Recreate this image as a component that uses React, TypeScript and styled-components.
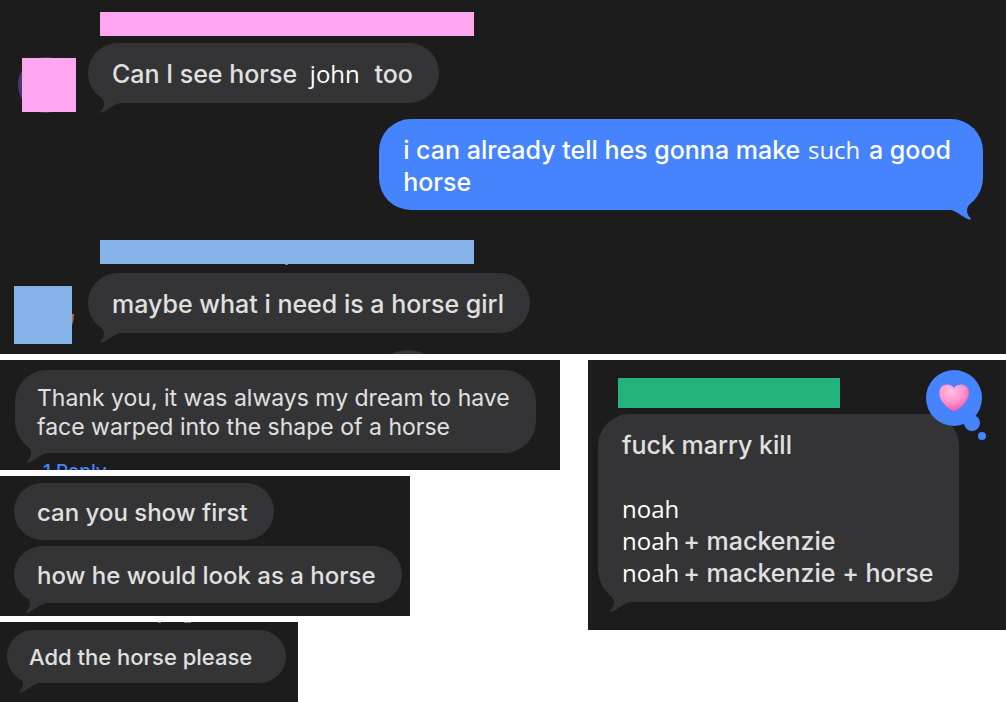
import React from "react";
import styled, { createGlobalStyle } from "styled-components";

const GlobalStyle = createGlobalStyle`
  *, *::before, *::after { box-sizing: border-box; }
  body { margin: 0; background: #ffffff; }
`;

const colors = {
  panel: "#1c1c1c",
  received: "#343436",
  sent: "#4583ff",
  text: "#e0e0e1",
};

const Page = styled.main`
  display: flex;
  flex-direction: column;
  gap: 6px;
  font-family: Inter, "Liberation Sans", sans-serif;
  color: ${colors.text};
`;

const Columns = styled.div`
  display: grid;
  grid-template-columns: minmax(0, 560fr) minmax(0, 418fr);
  column-gap: 28px;
  align-items: start;
`;

const Stack = styled.div`
  display: flex;
  flex-direction: column;
  align-items: flex-start;
  gap: 6px;
`;

const Panel = styled.section<{ $pad: string; $width?: string; $gap?: number }>`
  position: relative;
  display: flex;
  flex-direction: column;
  align-items: flex-start;
  gap: ${(p) => p.$gap ?? 0}px;
  width: ${(p) => p.$width ?? "100%"};
  padding: ${(p) => p.$pad};
  overflow: hidden;
  background: ${colors.panel};
`;

const NameBar = styled.div<{
  $color: string;
  $width: number;
  $indent: number;
  $height: number;
  $top?: number;
}>`
  width: ${(p) => p.$width}px;
  max-width: 100%;
  height: ${(p) => p.$height}px;
  margin-top: ${(p) => p.$top ?? 0}px;
  margin-left: ${(p) => p.$indent}px;
  background: ${(p) => p.$color};
`;

const Row = styled.div<{ $top: number }>`
  display: flex;
  align-items: flex-start;
  width: 100%;
  margin-top: ${(p) => p.$top}px;
`;

const AvatarSlot = styled.div<{ $left: number }>`
  flex: none;
  width: 88px;
  padding: 12px 0 0 ${(p) => p.$left}px;
  line-height: 0;
`;

type Size = "large" | "wrapped" | "medium" | "compact" | "small";

const sizes: Record<
  Size,
  { font: number; weight: number; line: number; pad: string; radius: number }
> = {
  large: { font: 25, weight: 500, line: 32, pad: "15px 26px 13px 24px", radius: 32 },
  wrapped: { font: 25, weight: 500, line: 32, pad: "15px 32px 12px 24px", radius: 32 },
  medium: { font: 23, weight: 400, line: 29, pad: "14px 26px 11px 22px", radius: 32 },
  compact: { font: 24, weight: 500, line: 31, pad: "14px 26px 12px 23px", radius: 30 },
  small: { font: 22, weight: 500, line: 29, pad: "13px 34px 11px 22px", radius: 28 },
};

const BubbleBox = styled.div<{ $size: Size; $sent?: boolean }>`
  position: relative;
  width: fit-content;
  margin-left: ${(p) => (p.$sent ? "auto" : "0")};
  padding: ${(p) => sizes[p.$size].pad};
  border-radius: ${(p) => sizes[p.$size].radius}px;
  background: ${(p) => (p.$sent ? colors.sent : colors.received)};
  color: ${(p) => (p.$sent ? "#ffffff" : colors.text)};
  font-size: ${(p) => sizes[p.$size].font}px;
  font-weight: ${(p) => sizes[p.$size].weight};
  line-height: ${(p) => sizes[p.$size].line}px;
`;

const Line = styled.p`
  margin: 0;
  min-height: 1lh;
  white-space: nowrap;
`;

const Word = styled.span<{ $gap?: string }>`
  margin: ${(p) => p.$gap ?? "0"};
  font-family: "Open Sans", "Noto Sans", sans-serif;
  font-size: 24px;
  font-weight: 500;
  line-height: 1;
  color: #ffffff;
`;

const TailSvg = styled.svg<{ $sent?: boolean }>`
  position: absolute;
  bottom: -10px;
  ${(p) => (p.$sent ? "right: 8px; transform: scaleX(-1);" : "left: 8px;")}
`;

const Tail = ({ sent }: { sent?: boolean }) => (
  <TailSvg $sent={sent} width="26" height="20" viewBox="0 0 26 20" aria-hidden="true">
    <path
      d="M2 1C6 4.500 8 7 8 10.500C8 13.500 6.500 16 4.500 18C3.600 19.400 4.400 20 6 19.600C11 18 16 12.500 24 10V1Z"
      fill={sent ? colors.sent : colors.received}
    />
  </TailSvg>
);

interface BubbleProps {
  size: Size;
  sent?: boolean;
  tail?: boolean;
  lines: React.ReactNode[];
  children?: React.ReactNode;
}

const Bubble = ({ size, sent, tail = true, lines, children }: BubbleProps) => (
  <BubbleBox $size={size} $sent={sent}>
    {tail && <Tail sent={sent} />}
    {lines.map((line, i) => (
      <Line key={i}>{line}</Line>
    ))}
    {children}
  </BubbleBox>
);

const ReplyLink = styled.a`
  height: 9px;
  margin: 8px 0 0 28px;
  color: ${colors.sent};
  font-size: 19px;
  font-weight: 500;
  line-height: 22px;
  text-decoration: none;
`;

const ReactionSvg = styled.svg`
  position: absolute;
  top: -46px;
  right: -30px;
`;

const Reaction = () => (
  <ReactionSvg width="64" height="74" viewBox="0 0 64 74" role="img" aria-label="Heart reaction">
    <defs>
      <radialGradient id="heart" cx="0.4" cy="0.25" r="0.8">
        <stop offset="0" stopColor="#ffbfe2" />
        <stop offset="0.55" stopColor="#ff92cd" />
        <stop offset="1" stopColor="#ff45a0" />
      </radialGradient>
    </defs>
    <g fill={colors.sent}>
      <circle cx="29" cy="30" r="28" />
      <circle cx="47" cy="55" r="8" />
      <circle cx="57" cy="68" r="4" />
    </g>
    <path
      d="M29 43.500C26 42.500 14.300 34.500 14.300 25C14.300 20 17.500 16.500 21.700 16.500C25 16.500 27.700 17.500 29 20.500C30.300 17.500 33 16.500 36.500 16.500C40.700 16.500 43.900 20 43.900 25C43.900 34.500 32 42.500 29 43.500Z"
      fill="url(#heart)"
    />
  </ReactionSvg>
);

const NextBubble = styled.svg`
  position: absolute;
  left: 388px;
  bottom: 0;
`;

const Specks = styled.svg<{ $left: number; $top: number }>`
  position: absolute;
  left: ${(p) => p.$left}px;
  top: ${(p) => p.$top}px;
`;

export default function App() {
  return (
    <Page>
      <GlobalStyle />
      <Panel $pad="12px 23px 9px 0">
        <NameBar $color="#fea6ef" $width={374} $indent={100} $height={24} />
        <Row $top={7}>
          <AvatarSlot $left={18}>
            <svg width="58" height="60" viewBox="0 0 58 60" aria-hidden="true">
              <circle cx="28" cy="30" r="28" fill="#4a3a70" />
              <rect x="4" y="3" width="54" height="54" fill="#fea6ef" />
            </svg>
          </AvatarSlot>
          <Bubble
            size="large"
            lines={[
              <>
                Can I see horse <Word $gap="0 8px 0 6px">john</Word> too
              </>,
            ]}
          />
        </Row>
        <Row $top={4}>
          <Bubble
            size="wrapped"
            sent
            lines={[
              <>
                i can already tell hes gonna make <Word $gap="0 2px 0 1px">such</Word> a good
              </>,
              "horse",
            ]}
          />
        </Row>
        <NameBar $color="#86b2ea" $width={374} $indent={100} $height={24} $top={30} />
        <Row $top={9}>
          <AvatarSlot $left={14}>
            <svg width="60" height="60" viewBox="0 0 60 60" aria-hidden="true">
              <path d="M58 29H60Q60 36 58 40Z" fill="#b5652c" />
              <rect x="0" y="1" width="58" height="58" fill="#86b2ea" />
            </svg>
          </AvatarSlot>
          <Bubble size="large" lines={["maybe what i need is a horse girl"]} />
        </Row>
        <Specks $left={284} $top={264} width="5" height="2" viewBox="0 0 5 2" aria-hidden="true">
          <rect x="1" width="3" height="1" fill="#8a8a8a" />
        </Specks>
        <NextBubble width="40" height="4" viewBox="0 0 40 4" aria-hidden="true">
          <path d="M3 4Q20 -4 37 4Z" fill={colors.received} />
        </NextBubble>
      </Panel>

      <Columns>
        <Stack>
          <Panel $pad="10px 24px 0 15px">
            <Bubble
              size="medium"
              lines={[
                "Thank you, it was always my dream to have",
                "face warped into the shape of a horse",
              ]}
            />
            <ReplyLink href="#replies">1 Reply</ReplyLink>
          </Panel>
          <Panel $pad="7px 8px 13px 14px" $width="fit-content" $gap={6}>
            <Bubble size="compact" tail={false} lines={["can you show first"]} />
            <Bubble size="compact" lines={["how he would look as a horse"]} />
          </Panel>
          <Panel $pad="8px 12px 19px 7px" $width="fit-content">
            <Specks $left={156} $top={0} width="40" height="2" viewBox="0 0 40 2" aria-hidden="true">
              <path d="M2 0H5V1H2ZM28 0H35V1H28Z" fill="#777777" />
            </Specks>
            <Bubble size="small" lines={["Add the horse please"]} />
          </Panel>
        </Stack>
        <Panel $pad="18px 24px 28px 10px">
          <NameBar $color="#23b27c" $width={222} $indent={20} $height={30} />
          <Row $top={6}>
            <Bubble
              size="large"
              lines={[
                "fuck marry kill",
                "",
                <Word>noah</Word>,
                <>
                  <Word $gap="0 4px 0 0">noah</Word>+ mackenzie
                </>,
                <>
                  <Word $gap="0 4px 0 0">noah</Word>+ mackenzie + horse
                </>,
              ]}
            >
              <Reaction />
            </Bubble>
          </Row>
        </Panel>
      </Columns>
    </Page>
  );
}
